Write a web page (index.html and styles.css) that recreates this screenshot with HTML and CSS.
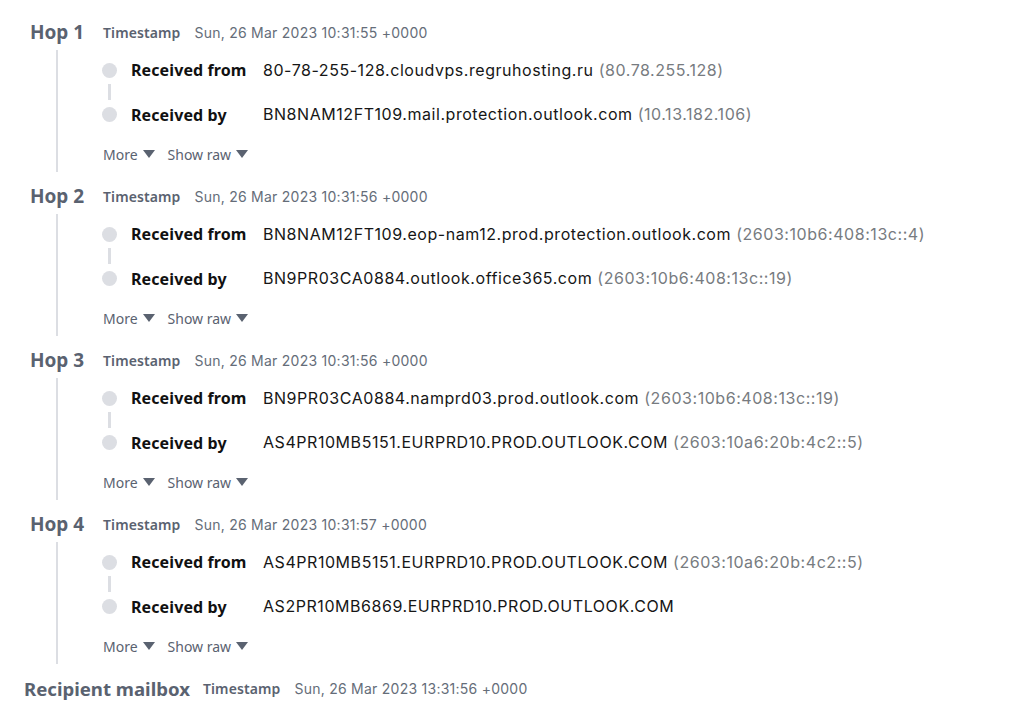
FILE: index.html
```html
<!DOCTYPE html>
<html>
<head>
<meta charset="utf-8">
<link rel="stylesheet" href="styles.css">
</head>
<body>
<div class="hops">
  <section class="hop">
    <div class="hop-head">
      <span class="hop-name">Hop 1</span>
      <span class="ts-label">Timestamp</span>
      <span class="ts-value">Sun, 26 Mar 2023 10:31:55 +0000</span>
    </div>
    <div class="hop-body">
      <div class="recv">
        <span class="dot"></span>
        <span class="recv-label">Received from</span>
        <span class="recv-value">80-78-255-128.cloudvps.regruhosting.ru <span class="ip">(80.78.255.128)</span></span>
      </div>
      <div class="connector"></div>
      <div class="recv">
        <span class="dot"></span>
        <span class="recv-label by">Received by</span>
        <span class="recv-value">BN8NAM12FT109.mail.protection.outlook.com <span class="ip">(10.13.182.106)</span></span>
      </div>
      <div class="actions">
        <span class="toggle">More <span class="caret"></span></span>
        <span class="toggle">Show raw <span class="caret"></span></span>
      </div>
    </div>
  </section>
  <section class="hop">
    <div class="hop-head">
      <span class="hop-name">Hop 2</span>
      <span class="ts-label">Timestamp</span>
      <span class="ts-value">Sun, 26 Mar 2023 10:31:56 +0000</span>
    </div>
    <div class="hop-body">
      <div class="recv">
        <span class="dot"></span>
        <span class="recv-label">Received from</span>
        <span class="recv-value">BN8NAM12FT109.eop-nam12.prod.protection.outlook.com <span class="ip">(2603:10b6:408:13c::4)</span></span>
      </div>
      <div class="connector"></div>
      <div class="recv">
        <span class="dot"></span>
        <span class="recv-label by">Received by</span>
        <span class="recv-value">BN9PR03CA0884.outlook.office365.com <span class="ip">(2603:10b6:408:13c::19)</span></span>
      </div>
      <div class="actions">
        <span class="toggle">More <span class="caret"></span></span>
        <span class="toggle">Show raw <span class="caret"></span></span>
      </div>
    </div>
  </section>
  <section class="hop">
    <div class="hop-head">
      <span class="hop-name">Hop 3</span>
      <span class="ts-label">Timestamp</span>
      <span class="ts-value">Sun, 26 Mar 2023 10:31:56 +0000</span>
    </div>
    <div class="hop-body">
      <div class="recv">
        <span class="dot"></span>
        <span class="recv-label">Received from</span>
        <span class="recv-value">BN9PR03CA0884.namprd03.prod.outlook.com <span class="ip">(2603:10b6:408:13c::19)</span></span>
      </div>
      <div class="connector"></div>
      <div class="recv">
        <span class="dot"></span>
        <span class="recv-label by">Received by</span>
        <span class="recv-value">AS4PR10MB5151.EURPRD10.PROD.OUTLOOK.COM <span class="ip">(2603:10a6:20b:4c2::5)</span></span>
      </div>
      <div class="actions">
        <span class="toggle">More <span class="caret"></span></span>
        <span class="toggle">Show raw <span class="caret"></span></span>
      </div>
    </div>
  </section>
  <section class="hop">
    <div class="hop-head">
      <span class="hop-name">Hop 4</span>
      <span class="ts-label">Timestamp</span>
      <span class="ts-value">Sun, 26 Mar 2023 10:31:57 +0000</span>
    </div>
    <div class="hop-body">
      <div class="recv">
        <span class="dot"></span>
        <span class="recv-label">Received from</span>
        <span class="recv-value">AS4PR10MB5151.EURPRD10.PROD.OUTLOOK.COM <span class="ip">(2603:10a6:20b:4c2::5)</span></span>
      </div>
      <div class="connector"></div>
      <div class="recv">
        <span class="dot"></span>
        <span class="recv-label by">Received by</span>
        <span class="recv-value">AS2PR10MB6869.EURPRD10.PROD.OUTLOOK.COM</span>
      </div>
      <div class="actions">
        <span class="toggle">More <span class="caret"></span></span>
        <span class="toggle">Show raw <span class="caret"></span></span>
      </div>
    </div>
  </section>
  <section class="hop last">
    <div class="hop-head">
      <span class="hop-name recipient">Recipient mailbox</span>
      <span class="ts-label">Timestamp</span>
      <span class="ts-value">Sun, 26 Mar 2023 13:31:56 +0000</span>
    </div>
  </section>
</div>
</body>
</html>
```
FILE: styles.css
```css
* { box-sizing: border-box; }
html, body { margin: 0; padding: 0; background: #ffffff; }
body {
  font-family: "Noto Sans", "Open Sans", sans-serif;
  color: #161616;
}
.hops {
  display: flex;
  flex-direction: column;
  padding: 20px 0 0 24px;
}
.hop {
  display: flex;
  flex-direction: column;
  height: 164px;
}
.hop.last { height: auto; }
.hop-head {
  display: flex;
  align-items: center;
  height: 24px;
  gap: 13px;
}
.hop-name {
  width: 66px;
  text-align: center;
  font-size: 19px;
  font-weight: 700;
  color: #5a6270;
  white-space: nowrap;
}
.hop-name.recipient {
  width: auto;
  text-align: left;
  font-size: 18.6px;
}
.ts-label {
  font-size: 14px;
  font-weight: 600;
  color: #5a6270;
  letter-spacing: 0.1px;
}
.ts-value {
  font-family: "Inter", "Noto Sans", sans-serif;
  font-size: 14px;
  letter-spacing: 0.25px;
  color: #656d79;
  margin-left: 1px;
}
.hop-body {
  margin-top: 6px;
  margin-left: 32px;
  border-left: 2px solid #dcdee3;
  padding: 6px 0 8px 45px;
  display: flex;
  flex-direction: column;
}
.recv {
  display: flex;
  align-items: center;
  height: 28px;
}
.dot {
  width: 15px;
  height: 15px;
  border-radius: 50%;
  background: #dcdee3;
  margin-left: -1px;
  flex: none;
}
.recv-label {
  width: 132px;
  margin-left: 14px;
  font-size: 16px;
  font-weight: 700;
  color: #111;
  letter-spacing: 0.1px;
  flex: none;
}
.recv-label.by { position: relative; top: 1px; }
.recv-value {
  font-family: "Inter", "Noto Sans", sans-serif;
  font-size: 16px;
  letter-spacing: 0.55px;
  color: #161616;
  white-space: nowrap;
}
.ip { color: #777b80; }
.connector {
  width: 3px;
  height: 16px;
  margin-left: 5px;
  background: #dcdee3;
}
.actions {
  display: flex;
  gap: 13px;
  height: 20px;
  align-items: center;
  margin-top: 16px;
}
.toggle {
  font-size: 14px;
  color: #5a6270;
  display: inline-flex;
  align-items: center;
  gap: 5px;
}
.caret {
  width: 0;
  height: 0;
  border-left: 6px solid transparent;
  border-right: 6px solid transparent;
  border-top: 8px solid #5a6270;
}
```
